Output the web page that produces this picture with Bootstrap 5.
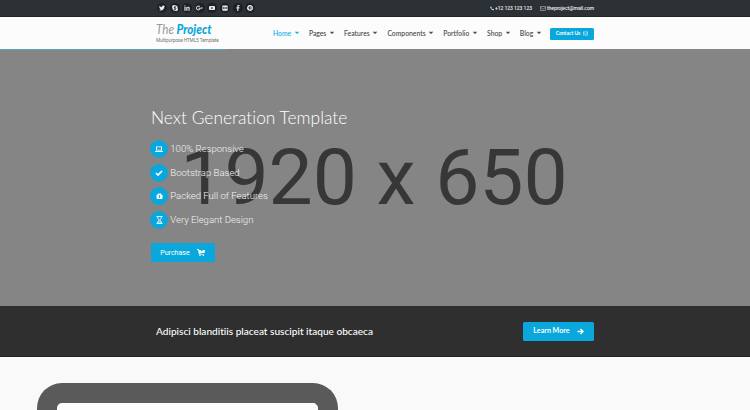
<!DOCTYPE html>
<html lang="en">
<head>
<meta charset="utf-8">
<meta name="viewport" content="width=device-width, initial-scale=1">
<title>The Project</title>
<link href="https://cdn.jsdelivr.net/npm/bootstrap@5.3.0/dist/css/bootstrap.min.css" rel="stylesheet">
<style>
body{font-family:Lato,"Open Sans",sans-serif;font-variant-ligatures:none;background:#f9f9f9;overflow:hidden;height:410px;line-height:1}
svg{display:block;flex:none;fill:currentColor}
a{text-decoration:none;color:inherit}
.wrap{width:444px;margin-left:150px}
.topbar{height:17px;background:#2b3134;border-bottom:1px solid #202526;font:500 5.6px/1 Roboto,sans-serif;color:#f2f2f2}
.socials{gap:2.6px;padding-left:7px}
.socials a{width:10px;height:10px;background:#1e2224;color:#e8e8e8}
.details{font-size:5px;letter-spacing:-.05px;gap:1px;padding-top:1px}
.details .second{margin-left:7px;color:#bbb}
.mainnav{height:32px;background:#fcfcfc}
.brand{width:123px;flex:none;padding-left:6px;color:#777}
.wordmark{height:15px;width:56px;overflow:visible}
.tagline{font:4.8px/1 Roboto,sans-serif;letter-spacing:-.13px;white-space:nowrap;margin-top:1px}
.menu{font-size:6.8px;font-weight:500;color:#444;gap:10.2px}
.menu a{gap:3.5px}
.menu .on{color:#09afdf}
.cta{background:#09a7dc;color:#fff;border-radius:1.5px;white-space:nowrap}
.contact{width:44px;height:12px;font-size:5px;font-weight:700;gap:3px;margin-top:1px}
.progressline{height:1px;background:#858585}
.progressline div{height:1px;width:226px;background:#58a5c2}
.hero{height:256px;background:#858585;color:#fff}
.dims{position:absolute;left:-1px;top:0;width:100%;text-align:center;font:400 78.7px/255px Roboto,sans-serif;color:#373737}
.hero .wrap{padding-top:58px}
.headline{font-size:17.4px;font-weight:300;line-height:20px;margin:0 0 12px;padding-left:1px;white-space:nowrap}
.points{font:300 9.55px/18px Roboto,sans-serif;gap:5.7px;color:#f4f4f4}
.points li{gap:2.300px}
.disc{width:18px;height:18px;background:#09a7dc;color:#fff}
.buy{width:64px;height:19px;margin-top:13.5px;margin-left:.5px;font:400 7.1px/1 Roboto,sans-serif;gap:7px}
.band{height:51px;background:#2f2f2f;border-bottom:1px solid #222;color:#fff}
.band p{font-size:10.1px;font-weight:500;margin:0 0 0 6px;white-space:nowrap}
.more{width:71px;height:19px;font-size:7.1px;font-weight:700;gap:7px}
.tablet{width:301px;height:27px;margin:26px 0 0 37px;border:20px solid #5a5a5a;border-bottom:0;border-radius:25px 25px 0 0;background:#fcfcfc}
</style>
</head>
<body>
<svg class="d-none">
 <symbol id="chev" viewBox="0 0 8 6"><path d="M1 1.500 4 4.500 7 1.500" fill="none" stroke="currentColor" stroke-width="2.200"/></symbol>
 <symbol id="mail" viewBox="0 0 12 10"><path d="M1 1h10v8H1zM1 2.500l5 4 5-4" fill="none" stroke="currentColor" stroke-width="1.200"/></symbol>
</svg>
<div class="topbar">
 <div class="wrap h-100 d-flex justify-content-between align-items-center">
  <div class="socials d-flex">
   <a href="#" class="rounded-circle d-flex align-items-center justify-content-center"><svg width="6" height="6" viewBox="0 0 16 16"><path d="M16 3.500l-1.700 1.300C14.300 11 9.500 14.500 5 14.500c-2 0-3.700-.5-5-1.500 2 .2 3.500-.3 4.700-1.300-1.500-.1-2.600-1-3-2.200h1.400C1.500 9 .7 7.800.7 6.200l1.400.4C.8 5.500.5 3.700 1.200 2.200 2.900 4.200 5 5.400 8 5.600 7.600 3 9 1.400 11.100 1.400c1 0 1.800.4 2.400 1l2-.8-1.300 1.900z"/></svg></a>
   <a href="#" class="rounded-circle d-flex align-items-center justify-content-center"><svg width="6" height="6" viewBox="0 0 16 16"><path fill-rule="evenodd" d="M4.500 0a4.500 4.500 0 0 1 2.500.8A7 7 0 0 1 15 9a4.300 4.300 0 0 1-6 6A7 7 0 0 1 1 7a4.500 4.500 0 0 1 3.500-7zM11 5C10.500 2.700 5 2.500 5 5.800c0 3.200 4.500 2 4.500 4 0 1.500-2.600 1.300-3.200-.2L4.700 10c.5 3.500 6.600 3.300 6.600-.2 0-3.500-4.500-2.600-4.500-4.200 0-1.200 2.200-1 2.500.2z"/></svg></a>
   <a href="#" class="rounded-circle d-flex align-items-center justify-content-center"><svg width="6" height="6" viewBox="0 0 16 16"><path d="M1 5h3v10H1zM1 1h3v3H1zM6 5h3v1.500C10.500 4 15 4.300 15 8.500V15h-3V9c0-2.500-3-2.200-3 0v6H6z"/></svg></a>
   <a href="#" class="rounded-circle d-flex align-items-center justify-content-center"><svg width="7" height="6" viewBox="0 0 19 16"><path d="M6.500 7h6c.7 4-2 7.500-6 7.500a6.500 6.500 0 1 1 4.500-11L9.200 5.200a4 4 0 1 0 .8 4.300H6.500zM15 5h1.500v2H19v1.500h-2.500v2H15v-2h-2V7h2z"/></svg></a>
   <a href="#" class="rounded-circle d-flex align-items-center justify-content-center"><svg width="6" height="6" viewBox="0 0 16 16"><path fill-rule="evenodd" d="M2 2.500h12l2 2v7l-2 2H2l-2-2v-7zM6 5v6l5-3z"/></svg></a>
   <a href="#" class="rounded-circle d-flex align-items-center justify-content-center"><svg width="6" height="6" viewBox="0 0 16 16"><path fill-rule="evenodd" d="M2 1h12l1 1v12l-1 1H2l-1-1V2zM3 6v4h4V6zM9 6v4h4V6z"/></svg></a>
   <a href="#" class="rounded-circle d-flex align-items-center justify-content-center"><svg width="6" height="6" viewBox="0 0 16 16"><path d="M6 16V9H4V6h2V4c0-3 2-4.300 6-3.800v2.700c-2-.1-3 0-3 1.500V6h3l-.5 3H9v7z"/></svg></a>
   <a href="#" class="rounded-circle d-flex align-items-center justify-content-center"><svg width="6" height="6" viewBox="0 0 16 16"><path fill-rule="evenodd" d="M8 0a8 8 0 1 1-2.500 15.600L7 11c3 2 6-1 5-4.500C11 2.500 4 3 4 7c0 1.500.7 2.300 1.500 2.500L6 8C5 5 9.500 4 10 6.500c.4 2-1.300 4-2.500 3L8.500 6H7L5 15.400A8 8 0 0 1 8 0z"/></svg></a>
  </div>
  <div class="details d-flex align-items-center text-nowrap">
   <svg width="4" height="5" viewBox="0 0 16 16"><path d="M4 0 1 2c-1 5 7 13 13 13l2-3-4-3-2 2c-2-1-4-3-5-5l2-2z"/></svg><span>+12 123 123 123</span>
   <svg class="second" width="6" height="5"><use href="#mail"/></svg><span>theproject@mail.com</span>
  </div>
 </div>
</div>
<nav class="mainnav">
 <div class="wrap h-100 d-flex align-items-center">
  <a class="brand" href="#">
   <svg class="wordmark" viewBox="0 0 56 15"><g font-family="Lato,cursive" font-style="italic"><text x="0" y="10.500" font-size="13" font-weight="400" fill="#999" textLength="18" lengthAdjust="spacingAndGlyphs">The</text><text x="20.500" y="10.500" font-size="13" font-weight="900" fill="#09a7dc" textLength="35" lengthAdjust="spacingAndGlyphs">Project</text></g></svg>
   <div class="tagline">Multipurpose HTML5 Template</div>
  </a>
  <div class="menu d-flex">
   <a href="#" class="on d-flex align-items-center">Home<svg width="4" height="3"><use href="#chev"/></svg></a>
   <a href="#" class="d-flex align-items-center">Pages<svg width="4" height="3"><use href="#chev"/></svg></a>
   <a href="#" class="d-flex align-items-center">Features<svg width="4" height="3"><use href="#chev"/></svg></a>
   <a href="#" class="d-flex align-items-center">Components<svg width="4" height="3"><use href="#chev"/></svg></a>
   <a href="#" class="d-flex align-items-center">Portfolio<svg width="4" height="3"><use href="#chev"/></svg></a>
   <a href="#" class="d-flex align-items-center">Shop<svg width="4" height="3"><use href="#chev"/></svg></a>
   <a href="#" class="d-flex align-items-center">Blog<svg width="4" height="3"><use href="#chev"/></svg></a>
  </div>
  <a href="#" class="cta contact ms-auto d-flex align-items-center justify-content-center">Contact Us<svg width="5" height="5"><use href="#mail"/></svg></a>
 </div>
</nav>
<div class="progressline"><div></div></div>
<section class="hero position-relative">
 <div class="dims">1920 x 650</div>
 <div class="wrap position-relative">
  <h1 class="headline">Next Generation Template</h1>
  <ul class="points list-unstyled d-flex flex-column mb-0">
   <li class="d-flex"><span class="disc rounded-circle d-flex align-items-center justify-content-center"><svg width="8" height="6" viewBox="0 0 16 12"><path fill-rule="evenodd" d="M2 1h12v8H2zM4 2.500v5h8v-5zM0 10h16v2H0z"/></svg></span>100% Responsive</li>
   <li class="d-flex"><span class="disc rounded-circle d-flex align-items-center justify-content-center"><svg width="8" height="6" viewBox="0 0 16 12"><path d="M2 6l4 4 8-8" fill="none" stroke="currentColor" stroke-width="3.500"/></svg></span>Bootstrap Based</li>
   <li class="d-flex"><span class="disc rounded-circle d-flex align-items-center justify-content-center"><svg width="7" height="6" viewBox="0 0 16 14"><path fill-rule="evenodd" d="M1 4h3c-1-2 1-4 4-2 3-2 5 0 4 2h3v8l-2 2H3l-2-2zM6.500 5v6h3V5z"/></svg></span>Packed Full of Features</li>
   <li class="d-flex"><span class="disc rounded-circle d-flex align-items-center justify-content-center"><svg width="7" height="8" viewBox="0 0 14 16"><path d="M1 1h12M1 15h12M3 1c0 5 3 5 3 7s-3 2-3 7M11 1c0 5-3 5-3 7s3 2 3 7M4 12h6" fill="none" stroke="currentColor" stroke-width="1.800"/></svg></span>Very Elegant Design</li>
  </ul>
  <a href="#" class="cta buy d-flex align-items-center justify-content-center">Purchase<svg width="8" height="7" viewBox="0 0 16 14"><path d="M0 0h3l1 2h3l2 3 3-3h4l-1 6-9 1v1h8v1H4L2 2H0z"/><circle cx="6" cy="12.500" r="1.500"/><circle cx="13" cy="12.500" r="1.500"/></svg></a>
 </div>
</section>
<section class="band">
 <div class="wrap h-100 d-flex align-items-center justify-content-between">
  <p>Adipisci blanditiis placeat suscipit itaque obcaeca</p>
  <a href="#" class="cta more d-flex align-items-center justify-content-center">Learn More<svg width="7" height="7" viewBox="0 0 14 14"><path d="M1 7h11M7 2l5 5-5 5" fill="none" stroke="currentColor" stroke-width="2.800"/></svg></a>
 </div>
</section>
<div class="tablet"></div>
<script src="https://cdn.jsdelivr.net/npm/bootstrap@5.3.0/dist/js/bootstrap.bundle.min.js"></script>
</body>
</html>
